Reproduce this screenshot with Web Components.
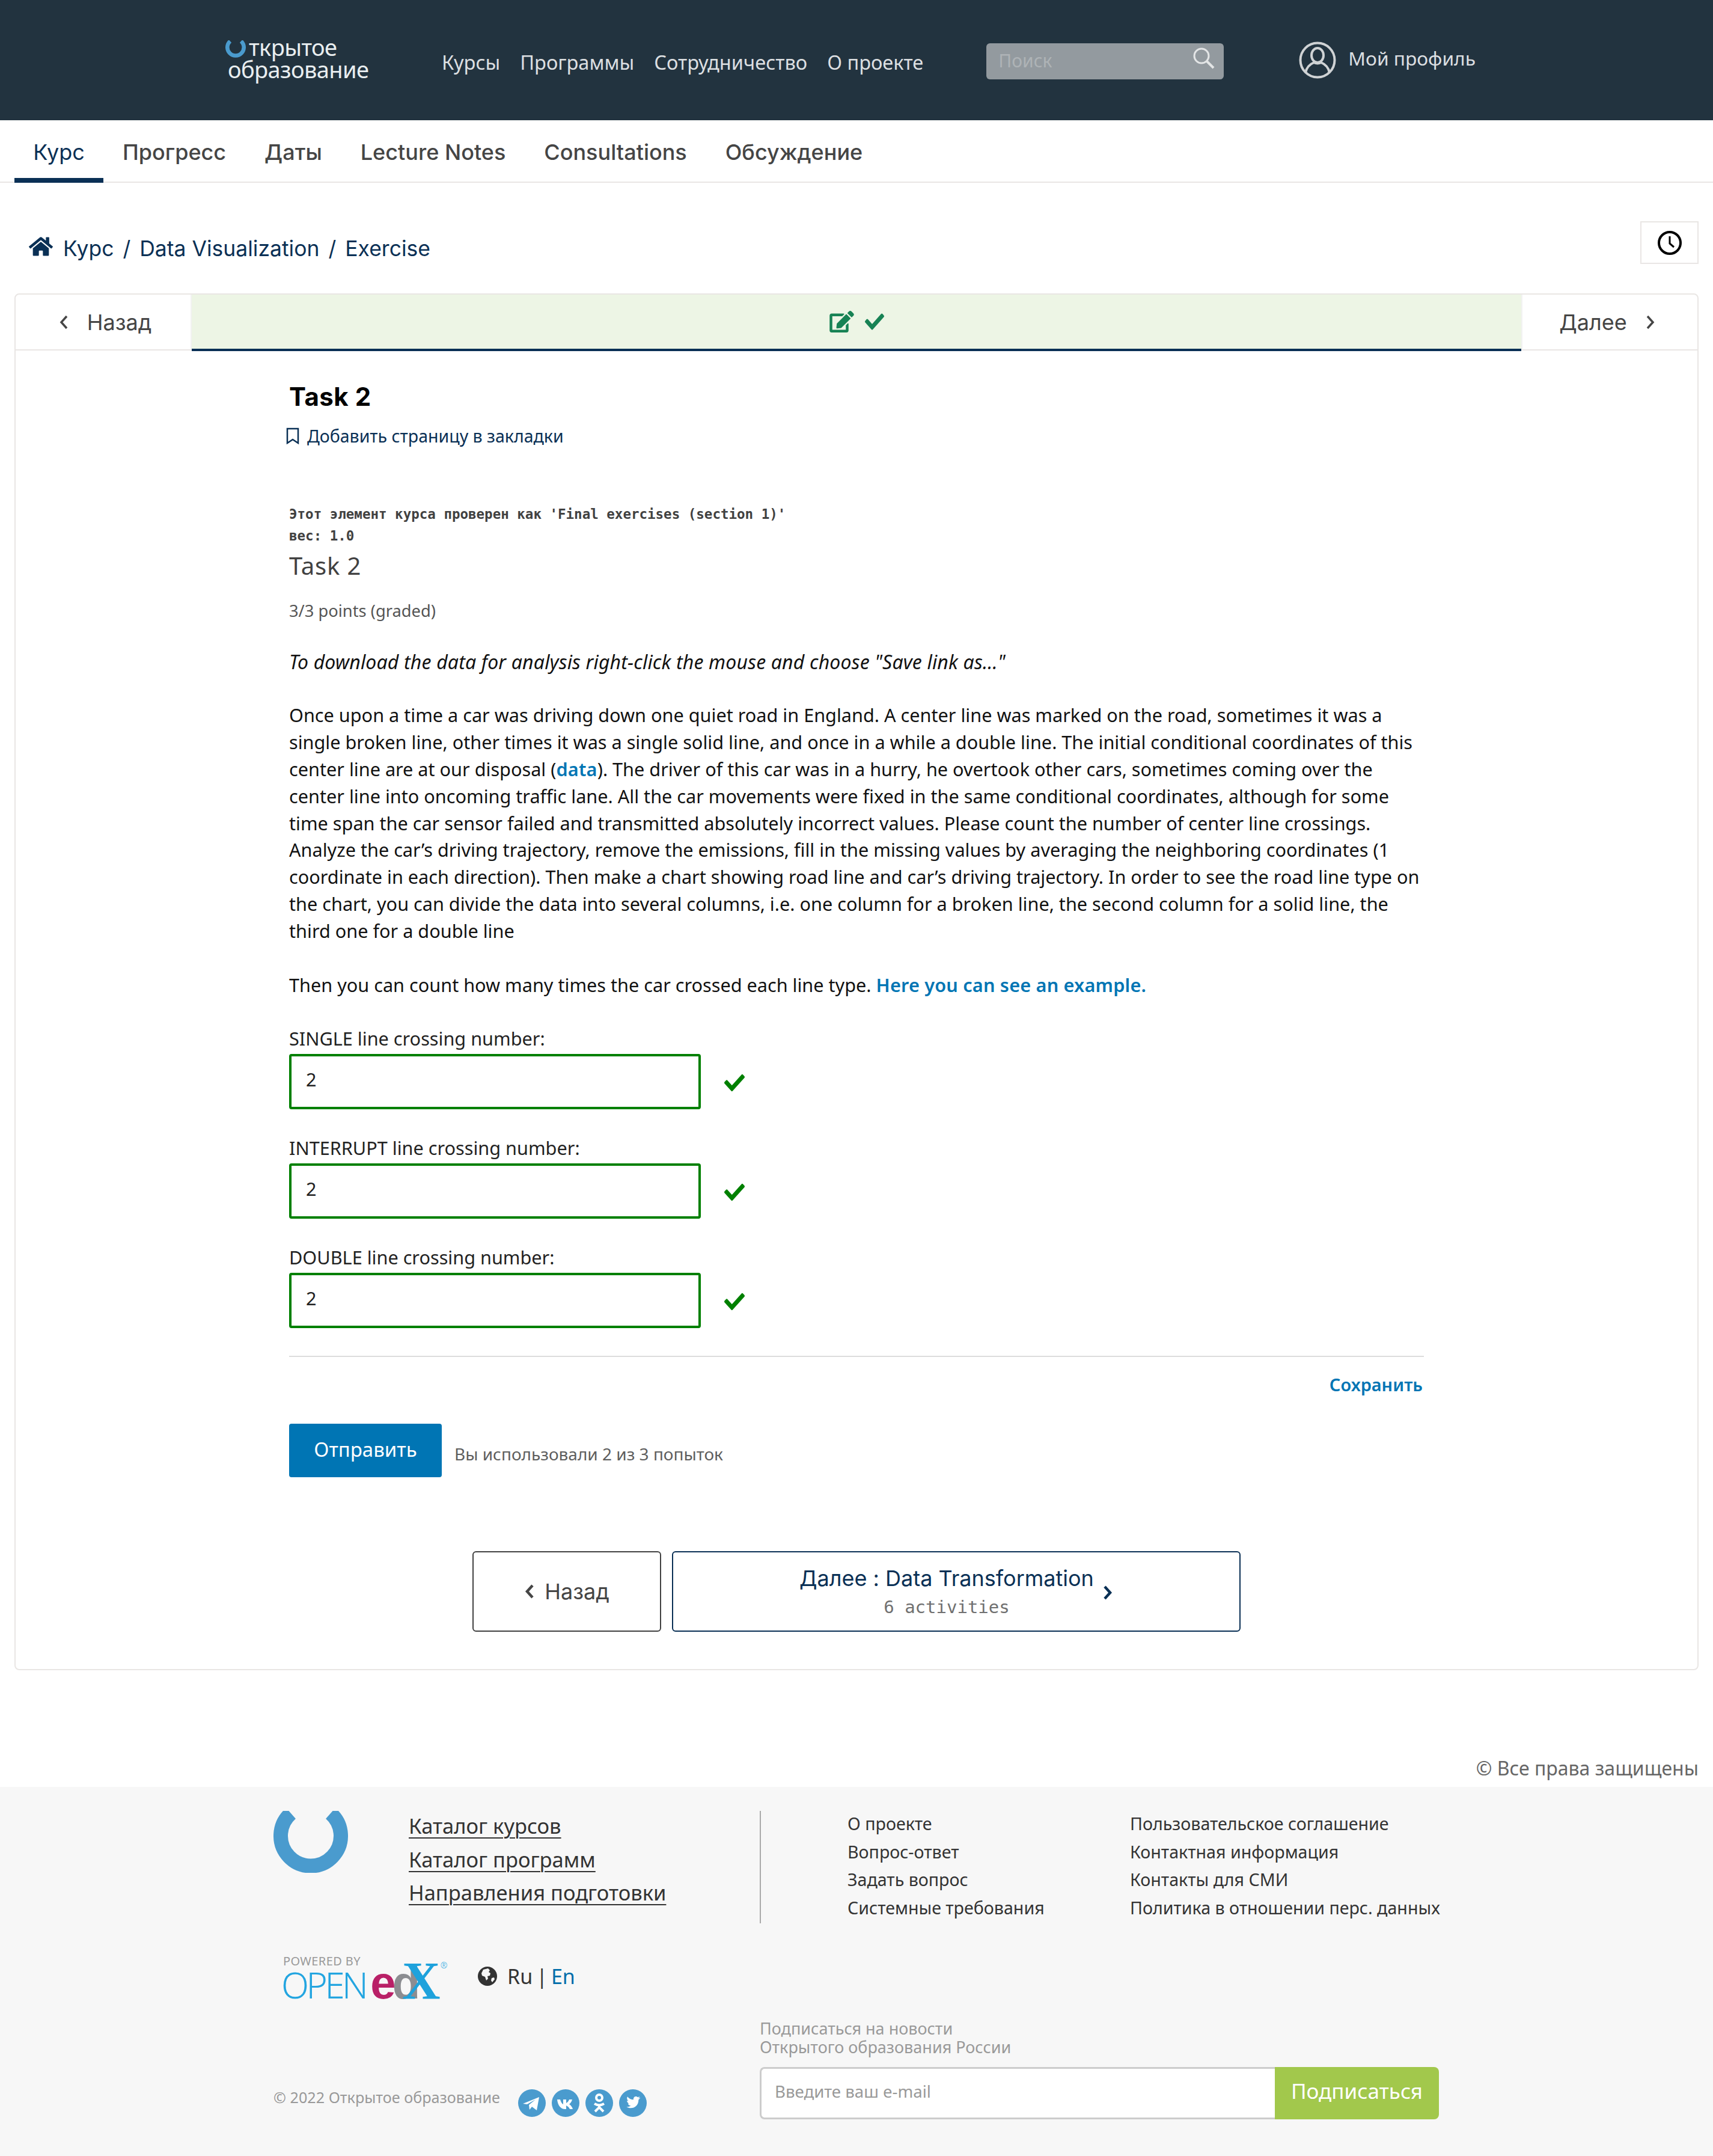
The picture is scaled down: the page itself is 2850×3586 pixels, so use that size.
<!DOCTYPE html>
<html lang="ru"><head><meta charset="utf-8"><title>Task 2</title>
<style>
html,body{margin:0;padding:0;background:#fff;font-family:"Noto Sans","Liberation Sans",sans-serif;color:#414141}
</style></head><body>
<site-header></site-header>
<course-tabs></course-tabs>
<bread-crumb></bread-crumb>
<course-card>
  <seq-nav></seq-nav>
  <problem-block>
    <numeric-field><span slot="label">SINGLE line crossing number:</span>2</numeric-field>
    <numeric-field><span slot="label">INTERRUPT line crossing number:</span>2</numeric-field>
    <numeric-field><span slot="label">DOUBLE line crossing number:</span>2</numeric-field>
  </problem-block>
  <unit-nav></unit-nav>
</course-card>
<copy-right></copy-right>
<site-footer></site-footer>
<script>
const ICON={
home:'<svg viewBox="0 0 576 512" width="40" height="36" fill="currentColor"><path d="M280.37 148.26L96 300.11V464a16 16 0 0 0 16 16l112.06-.29a16 16 0 0 0 15.92-16V368a16 16 0 0 1 16-16h64a16 16 0 0 1 16 16v95.64a16 16 0 0 0 16 16.05L464 480a16 16 0 0 0 16-16V300L295.67 148.26a12.19 12.19 0 0 0-15.3 0zM571.6 251.47L488 182.56V44.05a12 12 0 0 0-12-12h-56a12 12 0 0 0-12 12v72.61L318.47 43a48 48 0 0 0-61 0L4.34 251.47a12 12 0 0 0-1.6 16.9l25.5 31A12 12 0 0 0 45.15 301l235.22-193.74a12.19 12.19 0 0 1 15.3 0L530.9 301a12 12 0 0 0 16.9-1.6l25.5-31a12 12 0 0 0-1.7-16.93z"/></svg>',
check:(w,h)=>`<svg viewBox="0 0 512 512" width="${w}" height="${h}" fill="currentColor" preserveAspectRatio="none"><path d="M173.898 439.404l-166.4-166.4c-9.997-9.997-9.997-26.206 0-36.204l36.203-36.204c9.997-9.998 26.207-9.998 36.204 0L192 312.69 432.095 72.596c9.997-9.997 26.207-9.997 36.204 0l36.203 36.204c9.997 9.997 9.997 26.206 0 36.204l-294.4 294.401c-9.998 9.997-26.207 9.997-36.204-.001z"/></svg>`,
edit:'<svg viewBox="0 0 576 512" width="41" height="36" fill="currentColor"><path d="M402.6 83.2l90.2 90.2c3.8 3.8 3.8 10 0 13.8L274.4 405.6l-92.8 10.3c-12.4 1.4-22.9-9.1-21.5-21.5l10.3-92.8L388.8 83.2c3.8-3.8 10-3.8 13.8 0zm162-22.9l-48.8-48.8c-15.2-15.2-39.9-15.2-55.2 0l-35.4 35.4c-3.8 3.8-3.8 10 0 13.8l90.2 90.2c3.8 3.8 10 3.8 13.8 0l35.4-35.4c15.2-15.3 15.2-40 0-55.2zM384 346.2V448H64V128h229.8c3.2 0 6.2-1.3 8.5-3.5l40-40c7.6-7.6 2.2-20.5-8.5-20.5H48C21.5 64 0 85.5 0 112v352c0 26.5 21.5 48 48 48h352c26.5 0 48-21.5 48-48V306.2c0-10.7-12.9-16-20.5-8.5l-40 40c-2.2 2.3-3.5 5.3-3.5 8.5z"/></svg>',
left:(s=4)=>`<svg viewBox="0 0 18 28" width="18" height="28" fill="none" stroke="currentColor" stroke-width="${s}"><path d="M14 4L5 14l9 10"/></svg>`,
right:(s=4)=>`<svg viewBox="0 0 18 28" width="18" height="28" fill="none" stroke="currentColor" stroke-width="${s}"><path d="M4 4l9 10-9 10"/></svg>`,
ring:(w,h,c,st='')=>`<svg viewBox="0 0 124 103" width="${w}" height="${h}" style="display:block;${st}" fill="none" stroke="${c}" stroke-width="24"><path d="M29 4A50 50 0 1 0 95 4"/></svg>`
};
function reg(name,html){
  customElements.define(name,class extends HTMLElement{
    constructor(){super();this.attachShadow({mode:'open'}).innerHTML=html;}
  });
}
reg('site-header',`<style>
:host{display:flex;height:200px;background:#22333f;color:#dcdfe1;box-sizing:border-box;padding-left:372px;font-family:"Noto Sans",sans-serif}
.logo{width:245px;padding-top:60px;font-size:38px;line-height:37px;letter-spacing:-.6px;color:#e9eef0;white-space:nowrap}
.logo span{display:block;padding-left:7px}
.logo svg{display:inline-block!important;vertical-align:-3px;margin:0 5px 0 -4px}
nav{margin-left:118px;display:flex;gap:33px;font-size:32.6px;line-height:40px;padding-top:84px;white-space:nowrap}
.search{margin-left:105px;margin-top:72px;width:395px;height:60px;background:#939a9f;border-radius:6px;display:flex;align-items:center;justify-content:space-between;box-sizing:border-box;padding:0 14px 4px 20px;color:#aeb3b6;font-size:30px}
.search svg{margin-top:-6px}
.prof{margin-left:125px;display:flex;align-items:flex-start;padding-top:69px;gap:20px;font-size:31.7px;line-height:56px;white-space:nowrap}
</style>
<div class="logo"><span>${ICON.ring(34,29,'#4a9bce')}ткрытое<br>образование</span></div>
<nav><span>Курсы</span><span>Программы</span><span>Сотрудничество</span><span>О проекте</span></nav>
<div class="search"><span>Поиск</span><svg width="38" height="36" viewBox="0 0 38 36" fill="none" stroke="#e3e5e6" stroke-width="3"><circle cx="15" cy="14" r="12"/><path d="M24 23l11 11" stroke-width="4"/></svg></div>
<div class="prof"><svg width="62" height="62" viewBox="0 0 62 62" fill="none" stroke="#cfd2d4" stroke-width="4"><circle cx="31" cy="31" r="28.500"/><ellipse cx="31" cy="23" rx="10" ry="12"/><path d="M11 52c2-10 9-15 14-17 4 2 8 2 12 0 5 2 12 7 14 17"/></svg><span>Мой профиль</span></div>`);
reg('course-tabs',`<style>
:host{display:flex;height:104px;box-sizing:border-box;border-bottom:2px solid #e9e6e4;padding-left:24px;font-family:Inter,sans-serif;font-size:36px;font-weight:500;color:#454545;white-space:nowrap}
span{padding:0 32px;line-height:106px;height:102px;box-sizing:border-box}
.a{color:#0a3055;border-bottom:8px solid #0a3055;height:104px;width:148px;padding:0;text-align:center;font-weight:400}
</style><span class="a">Курс</span><span>Прогресс</span><span>Даты</span><span>Lecture Notes</span><span>Consultations</span><span>Обсуждение</span>`);
reg('bread-crumb',`<style>
:host{display:flex;height:184px;box-sizing:border-box;padding:64px 24px 0 48px;font-family:Inter,sans-serif;font-size:35.5px;color:#0a3055;justify-content:space-between}
.c{display:flex;align-items:center;height:90px;margin-top:0;gap:15px;white-space:nowrap}
.c svg{margin-right:2px;margin-top:-6px}
.cl{width:97px;height:71px;box-sizing:border-box;border:2px solid #e9e6e4;display:flex;align-items:center;justify-content:center}
</style><div class="c">${ICON.home}<span>Курс</span><span>/</span><span>Data Visualization</span><span>/</span><span>Exercise</span></div>
<div class="cl"><svg width="42" height="42" viewBox="0 0 42 42" fill="none" stroke="#000" stroke-width="4"><circle cx="21" cy="21" r="18"/><path d="M21 10v12l7 6" stroke-width="3"/></svg></div>`);
reg('course-card',`<style>
:host{display:block;margin:0 24px;border:2px solid #e9e6e4;border-radius:8px;box-sizing:border-box;height:2290px;padding-bottom:63px}
</style><slot></slot>`);
reg('seq-nav',`<style>
:host{display:flex;height:94px;font-family:Inter,sans-serif;font-size:36px;color:#454545}
.b{width:293px;box-sizing:border-box;height:93px;border-bottom:2px solid #e9e6e4;display:flex;align-items:center;justify-content:center;gap:30px}
.m{flex:1;background:#edf5e5;border-bottom:4px solid #0a3055;display:flex;align-items:center;justify-content:center;gap:18px;color:#178254}
</style><div class="b" style="border-right:2px solid #f2f2f2;padding-left:6px">${ICON.left(3.5)}<span>Назад</span></div>
<div class="m">${ICON.edit}${ICON.check(32,36)}</div>
<div class="b" style="border-left:2px solid #f2f2f2;padding-right:8px"><span>Далее</span>${ICON.right(3.5)}</div>`);
reg('problem-block',`<style>
:host{display:block;margin-left:455px;width:1888px;font-family:"Noto Sans",sans-serif;font-size:30.65px;color:#111;line-height:44.8px}
h1{margin:52px 0 0;font:700 42px/48px Inter,sans-serif;color:#000;letter-spacing:.5px}
.bm{margin:21px 0 0 -5px;display:flex;align-items:center;gap:13px;font:28.5px/40px "Noto Sans",sans-serif;color:#0a3055}
.g{margin-top:92px;font:700 22.5px/36px "DejaVu Sans Mono",monospace;color:#414141}
h3{margin:7px 0 0;font:400 40px/50px "Noto Sans",sans-serif;color:#414141;letter-spacing:.8px}
.pts{margin-top:30px;font-size:27.3px;line-height:40px;color:#555}
i{display:block;margin-top:43px;font-size:32px;letter-spacing:.17px;white-space:nowrap}
p{margin:43.600px 0 0;white-space:nowrap}
a{color:#0075b4;font-weight:600;text-decoration:none;letter-spacing:.2px}
.fields{margin-top:47.6px;display:flex;flex-direction:column;gap:45px}
hr{margin:46px 0 0;border:0;height:2px;background:#ddd}
.save{margin-top:26px;text-align:right;font-weight:600;font-size:29px;color:#0075b4;line-height:40px;padding-right:2px}
.sub{margin-top:45px;display:flex;gap:21px;align-items:center}
.btn{width:254px;height:89px;background:#0075b4;color:#fff;border-radius:4px;font-size:33px;display:flex;align-items:center;justify-content:center;padding-bottom:2px;box-sizing:border-box}
.note{color:#5e5e5e;font-size:28px;margin-top:12px}
</style>
<h1>Task 2</h1>
<div class="bm"><svg width="22" height="28" viewBox="0 0 22 28" fill="none" stroke="#0a3055" stroke-width="2.5"><path d="M2 2h18v24l-9-6-9 6z"/></svg><span>Добавить страницу в закладки</span></div>
<div class="g">Этот элемент курса проверен как 'Final exercises (section 1)'<br>вес: 1.0</div>
<h3>Task 2</h3>
<div class="pts">3/3 points (graded)</div>
<i>To download the data for analysis right-click the mouse and choose "Save link as..."</i>
<p>Once upon a time a car was driving down one quiet road in England. A center line was marked on the road, sometimes it was a<br>
single broken line, other times it was a single solid line, and once in a while a double line. The initial conditional coordinates of this<br>
center line are at our disposal (<a>data</a>). The driver of this car was in a hurry, he overtook other cars, sometimes coming over the<br>
center line into oncoming traffic lane. All the car movements were fixed in the same conditional coordinates, although for some<br>
time span the car sensor failed and transmitted absolutely incorrect values. Please count the number of center line crossings.<br>
Analyze the car’s driving trajectory, remove the emissions, fill in the missing values by averaging the neighboring coordinates (1<br>
coordinate in each direction). Then make a chart showing road line and car’s driving trajectory. In order to see the road line type on<br>
the chart, you can divide the data into several columns, i.e. one column for a broken line, the second column for a solid line, the<br>
third one for a double line</p>
<p style="margin-top:45px">Then you can count how many times the car crossed each line type. <a>Here you can see an example.</a></p>
<div class="fields"><slot></slot></div>
<hr>
<div class="save">Сохранить</div>
<div class="sub"><div class="btn">Отправить</div><div class="note">Вы использовали 2 из 3 попыток</div></div>`);
reg('numeric-field',`<style>
:host{display:block;font-family:"Noto Sans",sans-serif;font-size:30.65px;color:#222}
.l{line-height:38px;margin-bottom:7px}
.r{display:flex;align-items:center;gap:39px}
.i{width:685px;height:92px;box-sizing:border-box;border:4px solid #008000;border-radius:4px;padding:0 24px 8px;display:flex;align-items:center;box-shadow:inset 0 0 4px rgba(0,0,0,.08);background:#fff}
.k{color:#008000;margin-top:4px;display:flex}
</style><div class="l"><slot name="label"></slot></div><div class="r"><div class="i"><slot></slot></div><div class="k">${ICON.check(34,38)}</div></div>`);
reg('unit-nav',`<style>
:host{display:flex;justify-content:flex-start;gap:18px;margin:123px 0 0 760px;font-family:Inter,sans-serif;font-size:36px}
.b{height:134px;box-sizing:border-box;border:2px solid #414141;border-radius:6px;width:314px;display:flex;align-items:center;justify-content:center;gap:16px;color:#454545}
.n{width:946px;border-color:#0a3055;color:#0a3055;gap:14px}
.t{display:flex;flex-direction:column;align-items:center}
.t span{line-height:46px}
.t small{font:29px/38px "DejaVu Sans Mono",monospace;color:#707070;margin-top:6px}
.n svg{margin-top:4px}
</style><div class="b">${ICON.left(4.5)}<span>Назад</span></div>
<div class="b n"><div class="t"><span>Далее : Data Transformation</span><small>6 activities</small></div>${ICON.right(4.5)}</div>`);
reg('copy-right',`<style>
:host{display:block;margin-top:143px;height:40px;margin-bottom:11px;padding-right:24px;text-align:right;font:32px/40px "Noto Sans",sans-serif;color:#666}
</style>© Все права защищены`);
reg('site-footer',`<style>
:host{display:grid;grid-template-columns:809px 1130px;height:614px;box-sizing:border-box;background:#f7f7f7;padding:40px 0 0 455px;grid-template-rows:187px 1fr;font-family:"Noto Sans",sans-serif;color:#333}
.top{display:flex}
.links{margin-left:101px;margin-top:-3px;display:flex;flex-direction:column;font-size:34.5px;line-height:55.5px;white-space:nowrap}
.links span{text-decoration:underline;text-decoration-thickness:2px;text-underline-offset:6px}
.rt{border-left:2px solid #aaa;margin-left:0;padding-left:144px;display:grid;grid-template-columns:470px auto;font-size:28.6px;align-content:start;white-space:nowrap;height:187px;box-sizing:border-box;width:1132px}
.rt div{height:46.6px;line-height:41px}
.left{display:flex;flex-direction:column}
.ed{display:flex;margin-top:53px;margin-left:13px;height:73px;align-items:flex-start}
.edx{width:275px;font-family:"Noto Sans",sans-serif}
.pw{font-size:20px;line-height:20px;color:#999;letter-spacing:.4px;padding-left:3px}
.op{display:flex;align-items:baseline;font-size:60px;line-height:50px;margin-top:-2px;color:#23a5e0;letter-spacing:-4.5px;font-weight:300;white-space:nowrap}
.op b{font-family:"Liberation Sans",sans-serif;font-weight:700;letter-spacing:0}
.op .e{color:#b92067;font-size:76px;margin-left:8px}
.op .d{color:#8c8d91;font-size:76px;margin-left:-6px}
.op .x{font-family:"Liberation Serif",serif;color:#1ea2dc;font-size:88px;margin-left:-30px}
.op sup{font-size:14px;letter-spacing:0;align-self:flex-start;line-height:14px;margin-top:-8px}
.lang{margin-left:52px;margin-top:15px;display:flex;align-items:center;gap:17px;font-size:34px;line-height:40px}
.lang div{display:flex;gap:6px}
.lang em{font-style:normal;color:#006daa}
.cp{display:flex;margin-top:150px;align-items:flex-start;gap:30px;font-size:25.2px;color:#999;line-height:26px;white-space:nowrap}
.soc{display:flex;gap:10px}
.soc svg{display:block}
.sb{padding-top:159.5px;color:#999;font-size:27px;line-height:31px;margin-top:-1px}
.f{display:flex;margin-top:18.5px;width:1130px;height:87px}
.f div{box-sizing:border-box;height:87px}
.inp{flex:1;background:#fff;border:3px solid #ccc;border-right:0;border-radius:8px 0 0 8px;font-size:27.6px;padding:0 0 6px 22px;display:flex;align-items:center;color:#999}
.go{width:273px;background:#a2c84c;color:#fff;border-radius:0 8px 8px 0;font-size:35px;display:flex;align-items:center;justify-content:center;padding-bottom:8px}
</style>
<div class="top">${ICON.ring(124,103,'#4a9bce')}<div class="links"><span>Каталог курсов</span><span>Каталог программ</span><span>Направления подготовки</span></div></div>
<div class="rt"><div>О проекте</div><div>Пользовательское соглашение</div><div>Вопрос-ответ</div><div>Контактная информация</div><div>Задать вопрос</div><div>Контакты для СМИ</div><div>Системные требования</div><div>Политика в отношении перс. данных</div></div>
<div class="left">
<div class="ed"><div class="edx"><div class="pw">POWERED BY</div><div class="op"><span>OPEN</span><b class="e">e</b><b class="d">d</b><b class="x">X</b><sup>®</sup></div></div>
<div class="lang"><svg width="32" height="32" viewBox="0 0 32 32"><circle cx="16" cy="16" r="16" fill="#333"/><path d="M9 5l8-2 3 3-2 3 3 2-1 4-4 1 1 4-3 3-2-6-5-2-1-4zM23 19l4-1 1 3-4 5-2-3z" fill="#f7f7f7"/></svg><div><span>Ru</span><span>|</span><em>En</em></div></div></div>
<div class="cp"><span>© 2022 Открытое образование</span><div class="soc">
<svg width="46" height="46" viewBox="0 0 46 46"><circle cx="23" cy="23" r="23" fill="#4a9bce"/><path d="M8 24l27-11-4 22-8-6-4 5-1-8 11-9-14 8z" fill="#fff"/></svg>
<svg width="46" height="46" viewBox="0 0 46 46"><circle cx="23" cy="23" r="23" fill="#4a9bce"/><path d="M9 17h5c1 4 3 7 5 8v-8h5v6c2-1 4-3 5-6h5c-1 4-3 6-5 8 2 1 5 4 6 8h-5c-1-3-4-5-6-6v6h-2c-7 0-12-6-13-16z" fill="#fff"/></svg>
<svg width="46" height="46" viewBox="0 0 46 46"><circle cx="23" cy="23" r="23" fill="#4a9bce"/><g fill="none" stroke="#fff" stroke-width="4"><circle cx="23" cy="14" r="5"/><path d="M15 24c5 3 11 3 16 0M23 27v3M16 37l7-7 7 7"/></g></svg>
<svg width="46" height="46" viewBox="0 0 46 46"><circle cx="23" cy="23" r="23" fill="#4a9bce"/><path d="M35 14c-1 .6-2 1-3 1 1-.7 2-1.700 2-3-1 .7-2 1-3 1.300-2.500-3-8-1-7 4-4 0-8-2-10-5-1.500 2.500-.7 5.500 1.500 7-1 0-2-.3-2.500-.6 0 2.600 2 4.600 4 5-.8.2-1.600.2-2.300 0 .7 2 2.500 3.500 4.700 3.500-2 1.600-4.500 2.300-7 2 8 5 20 1 20-12 1-.7 2-1.700 3-3.200z" fill="#fff"/></svg>
</div></div></div>
<div class="sb">Подписаться на новости<br>Открытого образования России
<div class="f"><div class="inp">Введите ваш e-mail</div><div class="go">Подписаться</div></div></div>`);
</script>
</body></html>
